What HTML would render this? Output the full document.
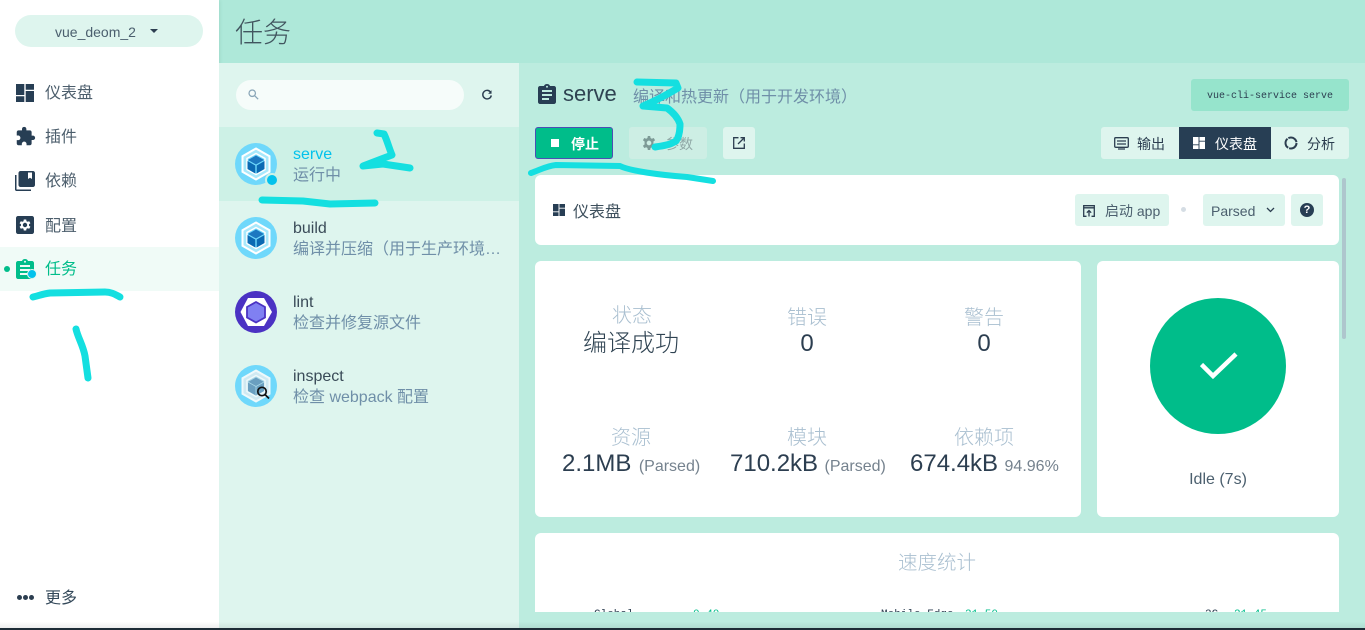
<!DOCTYPE html>
<html lang="zh"><head><meta charset="utf-8"><title>任务</title>
<style>
html,body{margin:0;padding:0;width:1365px;height:630px;overflow:hidden;background:#bcecdf}
body{position:relative;font-family:"Liberation Sans","Noto Sans CJK SC",sans-serif;color:#2c3e50;font-size:16px}
.a,.t{position:absolute}
.t{white-space:nowrap;line-height:22px}
.c{text-align:center}
.card{position:absolute;background:#fff;border-radius:6px}
.btn{position:absolute;background:#def5ee;border-radius:3px;height:32px}
.lab{color:#a9bfd0;font-size:20px;font-weight:300}
.val{color:#2c3e50;font-size:24px}
.sm{color:#75828e;font-size:16px}
svg{position:absolute;overflow:visible}
</style></head><body>
<svg width="0" height="0" style="position:absolute"><defs>
<symbol id="wp" viewBox="0 0 42 42">
<circle cx="21" cy="21" r="21" fill="#6fd8fb"/>
<path d="M21 5.500 34.500 13.200V28.800L21 36.500 7.500 28.800V13.200Z" fill="#a8e8fb" stroke="#fff" stroke-width="2"/>
<path d="M21 10.500 30 15.500V26.500L21 31.500 12 26.500V15.500Z" fill="#6fd8fb" stroke="#fff" stroke-width="1.500"/>
<path d="M21 12.500 29 17 21 21.500 13 17Z" fill="#1c78c0"/>
<path d="M12.500 18 20.300 22.500V30.500L12.500 26Z M29.500 18 21.700 22.500V30.500L29.500 26Z" fill="#0b6ab3"/>
</symbol>
<symbol id="grid" viewBox="0 0 18 18"><path d="M0 0H8.300V11H0ZM0 12.300H8.300V18H0ZM9.700 0H18V5.700H9.700ZM9.700 7H18V18H9.700Z"/></symbol>
<symbol id="clip" viewBox="0 0 18 20"><path fill-rule="evenodd" d="M2 2H6C6.400.800 7.500 0 9 0S11.600.800 12 2H16C17.100 2 18 2.900 18 4V18C18 19.100 17.100 20 16 20H2C.900 20 0 19.100 0 18V4C0 2.900.900 2 2 2ZM9 1.800A1 1 0 1 0 9 3.800 1 1 0 1 0 9 1.800ZM4 6V8H14V6ZM4 10V12H14V10ZM4 14V16H11V14Z"/></symbol>
</defs></svg>

<!-- top bar -->
<div class="a" style="left:219px;top:0;width:1146px;height:63px;background:#aee8d9"></div>
<div class="t" style="left:235px;top:12px;font-size:28px;line-height:38px;color:#41555f;font-weight:300;margin-top:2px">任务</div>

<!-- sidebar -->
<div class="a" style="left:0;top:0;width:219px;height:630px;background:#fff;box-shadow:1px 0 3px rgba(60,120,100,.12)"></div>
<div class="a" style="left:15px;top:15px;width:188px;height:32px;border-radius:16px;background:#def5ee"></div>
<div class="t" style="left:55px;top:21px;font-size:14px;color:#4b5f6e">vue_deom_2</div>
<div class="a" style="left:150px;top:29px;width:0;height:0;border:4px solid transparent;border-top:4px solid #2c3e50"></div>

<svg style="left:16px;top:84px;fill:#273e54" width="18" height="18"><use href="#grid"/></svg>
<div class="t" style="left:45px;top:83px;color:#4c5e6c">仪表盘</div>
<svg style="left:15px;top:126px;fill:#273e54" width="21" height="21" viewBox="0 0 24 24"><path d="M20.500 11H19V7C19 5.900 18.100 5 17 5H13V3.500C13 2.100 11.900 1 10.500 1S8 2.100 8 3.500V5H4C2.900 5 2 5.900 2 7V10.800H3.500C5 10.800 6.200 12 6.200 13.500S5 16.200 3.500 16.200H2V20C2 21.100 2.900 22 4 22H7.800V20.500C7.800 19 9 17.800 10.500 17.800S13.200 19 13.200 20.500V22H17C18.100 22 19 21.100 19 20V16H20.500C21.900 16 23 14.900 23 13.500S21.900 11 20.500 11Z"/></svg>
<div class="t" style="left:45px;top:127px;color:#4c5e6c">插件</div>
<svg style="left:15px;top:171px;fill:#273e54" width="20" height="20" viewBox="0 0 20 20"><path fill-rule="evenodd" d="M0 4H1.500V18.500H16V20H1.500C.700 20 0 19.300 0 18.500ZM5.500 0H18C19.100 0 20 .900 20 2V14C20 15.100 19.100 16 18 16H5.500C4.400 16 3.500 15.100 3.500 14V2C3.500 .900 4.400 0 5.500 0ZM13 1.500V8L15 6.800 17 8V1.500Z"/></svg>
<div class="t" style="left:45px;top:171px;color:#4c5e6c">依赖</div>
<svg style="left:16px;top:216px;fill:#273e54" width="18" height="18" viewBox="0 0 18 18"><path fill-rule="evenodd" d="M2 0H16C17.100 0 18 .900 18 2V16C18 17.100 17.100 18 16 18H2C.900 18 0 17.100 0 16V2C0 .900.900 0 2 0ZM9 6.800A2.200 2.200 0 1 0 9 11.200 2.200 2.200 0 1 0 9 6.800ZM7.800 3.500 7.500 5.200 6.500 5.800 4.800 5.200 3.600 7.200 5 8.300V9.700L3.600 10.800 4.800 12.800 6.500 12.200 7.500 12.800 7.800 14.500H10.200L10.500 12.800 11.500 12.200 13.200 12.800 14.400 10.800 13 9.700V8.300L14.400 7.200 13.200 5.200 11.500 5.800 10.500 5.200 10.200 3.500Z"/></svg>
<div class="t" style="left:45px;top:216px;color:#4c5e6c">配置</div>
<div class="a" style="left:0;top:247px;width:219px;height:44px;background:#f0fbf7"></div>
<div class="a" style="left:4px;top:266px;width:6px;height:6px;border-radius:50%;background:#00bd8a"></div>
<svg style="left:16px;top:259px;fill:#00bd8a" width="18" height="20"><use href="#clip"/></svg>
<div class="a" style="left:27px;top:269px;width:8px;height:8px;border-radius:50%;background:#03c2ec;border:1px solid #e4f9f3"></div>
<div class="t" style="left:45px;top:259px;color:#00bd8a">任务</div>
<div class="a" style="left:17px;top:595px;width:5px;height:5px;border-radius:50%;background:#2c3e50"></div>
<div class="a" style="left:23px;top:595px;width:5px;height:5px;border-radius:50%;background:#2c3e50"></div>
<div class="a" style="left:29px;top:595px;width:5px;height:5px;border-radius:50%;background:#2c3e50"></div>
<div class="t" style="left:45px;top:588px;color:#34495a">更多</div>

<!-- task list -->
<div class="a" style="left:219px;top:63px;width:300px;height:567px;background:#def5ee"></div>
<div class="a" style="left:236px;top:80px;width:228px;height:30px;border-radius:15px;background:#f6fcfa"></div>
<svg style="left:248px;top:89px" width="11" height="11" viewBox="0 0 13 13" fill="none" stroke="#8aa6b8" stroke-width="1.500"><circle cx="5" cy="5" r="3.800"/><path d="M8 8 12 12"/></svg>
<svg style="left:481px;top:89px" width="12" height="12" viewBox="0 0 14 14" fill="none" stroke="#2c3e50" stroke-width="1.700"><path d="M11.500 4.200A5 5 0 1 0 12 7.500"/><path d="M12.300 1.500V5.500H8.300Z" fill="#2c3e50" stroke="none"/></svg>
<div class="a" style="left:219px;top:127px;width:300px;height:74px;background:#cdf1e6"></div>

<svg style="left:235px;top:143px" width="42" height="42"><use href="#wp"/></svg>
<div class="a" style="left:265px;top:173px;width:10px;height:10px;border-radius:50%;background:#03c2ec;border:2px solid #cdf1e6"></div>
<div class="t" style="left:293px;top:144px;color:#03c2ec">serve</div>
<div class="t" style="left:293px;top:165px;color:#6f8fa8">运行中</div>

<svg style="left:235px;top:217px" width="42" height="42"><use href="#wp"/></svg>
<div class="t" style="left:293px;top:218px;color:#3a4b58">build</div>
<div class="t" style="left:293px;top:239px;color:#6f8fa8">编译并压缩（用于生产环境…</div>

<svg style="left:235px;top:291px" width="42" height="42" viewBox="0 0 42 42"><circle cx="21" cy="21" r="21" fill="#4b32c3"/><path d="M13 7H29L37 21 29 35H13L5.500 21Z" fill="#fff"/><path d="M21 11 30 16V26.500L21 31.500 12 26.500V16Z" fill="#8080f2" stroke="#4b32c3" stroke-width="1.800"/></svg>
<div class="t" style="left:293px;top:292px;color:#3a4b58">lint</div>
<div class="t" style="left:293px;top:313px;color:#6f8fa8">检查并修复源文件</div>

<svg style="left:235px;top:365px" width="42" height="42" viewBox="0 0 42 42"><circle cx="21" cy="21" r="21" fill="#6fd8fb"/><path d="M21 5.500 34.500 13.200V28.800L21 36.500 7.500 28.800V13.200Z" fill="#cfe9f2" stroke="#eef9fb" stroke-width="2"/><path d="M21 10.500 30 15.500V26.500L21 31.500 12 26.500V15.500Z" fill="#a9d8e8" stroke="#eef9fb" stroke-width="1.500"/><path d="M21 12.500 29 17V26L21 30.500 13 26V17Z" fill="#6a9fc0"/><path d="M13 17 21 21.500 29 17M21 21.500V30" stroke="#a9d8e8" stroke-width=".8" fill="none"/><circle cx="27" cy="26.500" r="4.200" fill="none" stroke="#111" stroke-width="1.700"/><path d="M30 29.500 34 33.500" stroke="#111" stroke-width="1.800"/></svg>
<div class="t" style="left:293px;top:366px;color:#3a4b58">inspect</div>
<div class="t" style="left:293px;top:387px;color:#6f8fa8">检查 webpack 配置</div>

<!-- main head -->
<svg style="left:538px;top:84px;fill:#273e54" width="18" height="20"><use href="#clip"/></svg>
<div class="t" style="left:563px;top:80px;font-size:22px;line-height:28px;color:#2f4352">serve</div>
<div class="t" style="left:633px;top:87px;color:#6f8fa8">编译和热更新（用于开发环境）</div>
<div class="a" style="left:1191px;top:79px;width:158px;height:32px;border-radius:3px;background:#96e4cc"></div>
<div class="t c" style="left:1191px;top:86px;width:158px;font:10px/22px 'Liberation Mono',monospace;color:#2c3e50">vue-cli-service serve</div>

<div class="a" style="left:535px;top:127px;width:76px;height:30px;border:1px solid #4b4fb5;border-radius:3px;background:#00bd8a"></div>
<div class="a" style="left:551px;top:139px;width:8px;height:8px;background:#fff"></div>
<div class="t" style="left:571px;top:133px;font-size:14px;color:#fff;font-weight:700">停止</div>
<div class="btn" style="left:629px;top:127px;width:78px;background:#cdeee4"></div>
<svg style="left:642px;top:136px;fill:#7d9a96" width="14" height="14" viewBox="0 0 18 18"><path fill-rule="evenodd" d="M7.500 0 7 2.600 5.400 3.500 2.900 2.600 1.200 5.400 3.300 7.100V10.900L1.200 12.600 2.900 15.400 5.400 14.500 7 15.400 7.500 18H10.500L11 15.400 12.600 14.500 15.100 15.400 16.800 12.600 14.700 10.900V7.100L16.800 5.400 15.100 2.600 12.600 3.500 11 2.600 10.500 0ZM9 6A3 3 0 1 1 9 12 3 3 0 1 1 9 6Z"/></svg>
<div class="t" style="left:665px;top:133px;font-size:14px;color:#90a8a6">参数</div>
<div class="btn" style="left:723px;top:127px;width:32px"></div>
<svg style="left:733px;top:137px" width="12" height="12" viewBox="0 0 12 12" fill="none" stroke="#2c3e50" stroke-width="1.300"><path d="M5.500.700H.700V11.300H11.300V6.500"/><path d="M5 7 11 1M7.500.700H11.300V4.500"/></svg>

<div class="a" style="left:1101px;top:127px;width:248px;height:32px;border-radius:3px;background:#def5ee"></div>
<svg style="left:1114px;top:137px" width="15" height="13" viewBox="0 0 15 13" fill="none" stroke="#2c3e50" stroke-width="1.300"><rect x=".700" y=".700" width="13.600" height="9.600" rx="1"/><path d="M3 4H12M3 7H12M4 12H11"/></svg>
<div class="t" style="left:1137px;top:133px;font-size:14px;color:#2c3e50">输出</div>
<div class="a" style="left:1179px;top:127px;width:92px;height:32px;background:#273e54"></div>
<svg style="left:1193px;top:137px;fill:#fff" width="12" height="12"><use href="#grid"/></svg>
<div class="t" style="left:1215px;top:133px;font-size:14px;color:#fff">仪表盘</div>
<svg style="left:1284px;top:136px" width="14" height="14" viewBox="0 0 14 14" fill="none" stroke="#2c3e50" stroke-width="2"><circle cx="7" cy="7" r="5.500" stroke-dasharray="10.500 1"/></svg>
<div class="t" style="left:1307px;top:133px;font-size:14px;color:#2c3e50">分析</div>

<!-- scrollbar -->
<div class="a" style="left:1342px;top:178px;width:4px;height:161px;border-radius:2px;background:#aec6cd"></div>

<!-- dashboard header -->
<div class="card" style="left:535px;top:175px;width:804px;height:70px"></div>
<svg style="left:553px;top:204px;fill:#273e54" width="12" height="12"><use href="#grid"/></svg>
<div class="t" style="left:573px;top:202px;font-size:16px;color:#3d4f5c">仪表盘</div>
<div class="btn" style="left:1075px;top:194px;width:94px"></div>
<svg style="left:1083px;top:205px" width="12" height="12" viewBox="0 0 12 12" fill="none" stroke="#2c3e50" stroke-width="1.300"><path d="M3.500 11.300H.700V.700H11.300V11.300H8.500M6 11.500V5.500M3.800 7.700 6 5.500 8.200 7.700M.700 2.800H11.300"/></svg>
<div class="t" style="left:1105px;top:200px;font-size:14px;color:#4b5f6e">启动 app</div>
<div class="a" style="left:1181px;top:207px;width:5px;height:5px;border-radius:50%;background:#d5dde4"></div>
<div class="btn" style="left:1203px;top:194px;width:82px"></div>
<div class="t" style="left:1211px;top:200px;font-size:14px;color:#4b5f6e">Parsed</div>
<svg style="left:1266px;top:207px" width="9" height="6" viewBox="0 0 9 6" fill="none" stroke="#2c3e50" stroke-width="1.300"><path d="M1 1 4.500 4.500 8 1"/></svg>
<div class="btn" style="left:1291px;top:194px;width:32px"></div>
<div class="a" style="left:1300px;top:203px;width:14px;height:14px;border-radius:50%;background:#273e54;color:#fff;font-size:11px;font-weight:700;line-height:14px;text-align:center">?</div>

<!-- stats -->
<div class="card" style="left:535px;top:261px;width:546px;height:256px"></div>
<div class="t c lab" style="left:572px;top:305px;width:120px">状态</div>
<div class="t c" style="left:552px;top:333px;width:158px;font-size:24px;color:#2f4352;font-weight:300">编译成功</div>
<div class="t c lab" style="left:747px;top:307px;width:120px">错误</div>
<div class="t c val" style="left:747px;top:333px;width:120px">0</div>
<div class="t c lab" style="left:924px;top:307px;width:120px">警告</div>
<div class="t c val" style="left:924px;top:333px;width:120px">0</div>
<div class="t c lab" style="left:571px;top:427px;width:120px">资源</div>
<div class="t" style="left:562px;top:453px"><span class="val">2.1MB</span> <span class="sm" style="margin-left:3px">(Parsed)</span></div>
<div class="t c lab" style="left:747px;top:427px;width:120px">模块</div>
<div class="t" style="left:730px;top:453px"><span class="val">710.2kB</span> <span class="sm" style="margin-left:2px">(Parsed)</span></div>
<div class="t c lab" style="left:924px;top:427px;width:120px">依赖项</div>
<div class="t" style="left:910px;top:453px"><span class="val">674.4kB</span> <span class="sm" style="margin-left:2px">94.96%</span></div>

<!-- status -->
<div class="card" style="left:1097px;top:261px;width:242px;height:256px"></div>
<div class="a" style="left:1150px;top:298px;width:136px;height:136px;border-radius:50%;background:#00bd8a"></div>
<svg style="left:1198px;top:351px" width="40" height="30" viewBox="0 0 40 30" fill="none" stroke="#fff" stroke-width="4.500"><path d="M3.500 13.500 15 25 38 3"/></svg>
<div class="t c" style="left:1097px;top:469px;width:242px;font-size:16px;color:#4b5f6e">Idle (7s)</div>

<!-- speed -->
<div class="card" style="left:535px;top:533px;width:804px;height:90px;border-radius:6px 6px 0 0"></div>
<div class="t c" style="left:535px;top:552px;width:804px;font-size:19.500px;color:#a9bfd0;font-weight:300">速度统计</div>
<div class="a" style="left:535px;top:606px;width:804px;height:6px;overflow:hidden;background:#fff">
<div class="t" style="left:59px;top:3px;font:11px/13px 'Liberation Mono',monospace;color:#2c3e50">Global</div>
<div class="t" style="left:158px;top:3px;font:11px/13px 'Liberation Mono',monospace;color:#00bd8a">0.40</div>
<div class="t" style="left:346px;top:3px;font:11px/13px 'Liberation Mono',monospace;color:#2c3e50">Mobile Edge</div>
<div class="t" style="left:430px;top:3px;font:11px/13px 'Liberation Mono',monospace;color:#00bd8a">31.50</div>
<div class="t" style="left:670px;top:3px;font:11px/13px 'Liberation Mono',monospace;color:#2c3e50">3G</div>
<div class="t" style="left:699px;top:3px;font:11px/13px 'Liberation Mono',monospace;color:#00bd8a">21.45</div>
</div>
<div class="a" style="left:519px;top:612px;width:846px;height:16px;background:#bcecdf"></div>
<div class="a" style="left:0;top:612px;width:1365px;height:16px;background:linear-gradient(rgba(0,0,0,0) 60%,rgba(0,0,0,.07));pointer-events:none"></div>
<div class="a" style="left:0;top:628px;width:1365px;height:2px;background:#1d2c36"></div>

<!-- annotations -->
<svg style="left:0;top:0" width="1365" height="630" viewBox="0 0 1365 630" fill="none" stroke="#14dfe0" stroke-width="7" stroke-linecap="round" stroke-linejoin="round">
<path d="M33 297C38 296 42 294 50 293L105 292C112 292 116 295 120 297"/>
<path d="M76 329C78 338 83 345 85 356L88 378"/>
<path d="M262 200 303 201 330 204 375 203"/>
<path d="M377 133 384 134C387 140 389 148 392 155L363 166 383 164 410 168"/>
<path d="M637 82 676 83 678 88C668 94 655 101 643 106L667 108C674 113 678 118 680 124C680 132 679 137 676 141 670 145 662 146 655 147"/>
<path d="M531 173C540 170 546 166 556 165L620 166C630 171 660 175 687 177L713 181" stroke-width="6"/>
</svg>
</body></html>
